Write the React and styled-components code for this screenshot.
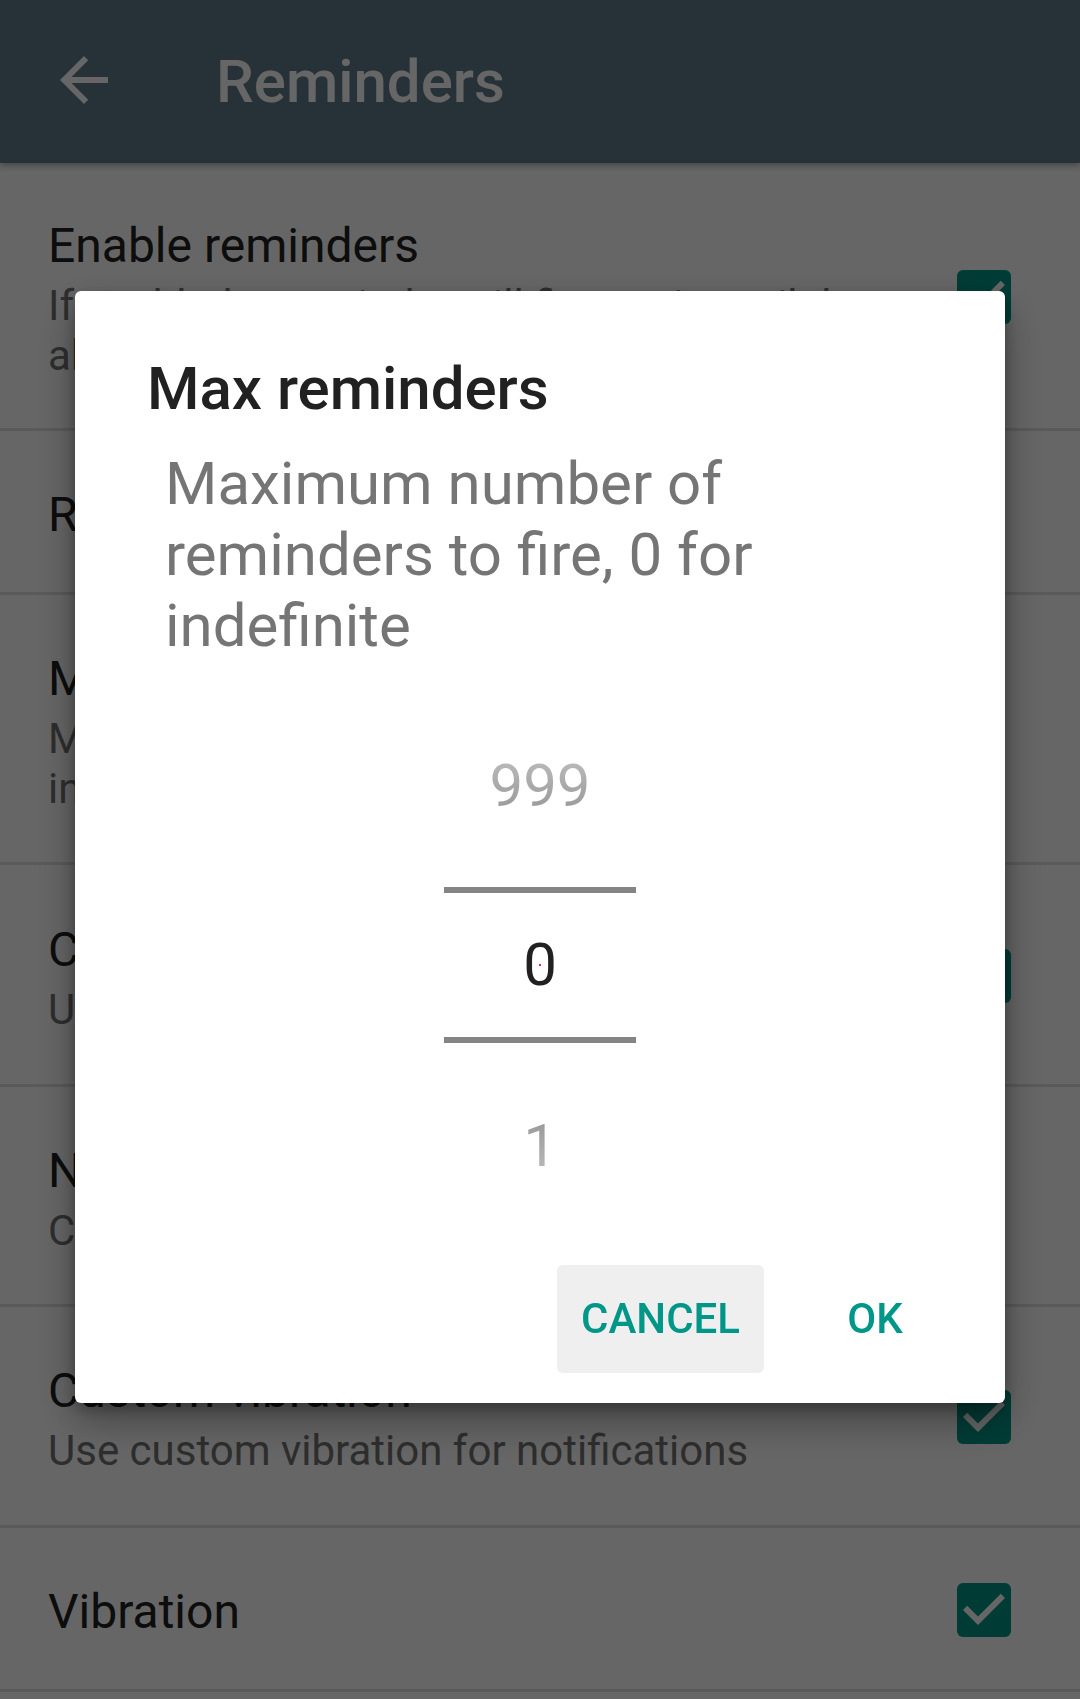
import React from 'react';
import styled, { createGlobalStyle } from 'styled-components';

const GlobalStyle = createGlobalStyle`
  body {
    margin: 0;
    background: #ffffff;
    font-family: Roboto, "Noto Sans", sans-serif;
  }
`

const prefs = [
    { title: 'Enable reminders', summary: ['If enabled, a reminder will fire again until the', 'alarm is dismissed'], checked: true, h: 268 },
    { title: 'Reminder interval', h: 164 },
    { title: 'Max reminders', summary: ['Maximum number of reminders to fire, 0 for', 'indefinite'], h: 270 },
    { title: 'Custom sound', summary: ['Use custom sound for notifications'], checked: true, h: 222 },
    { title: 'Notification sound', summary: ['Chime'], h: 220 },
    { title: 'Custom vibration', summary: ['Use custom vibration for notifications'], checked: true, h: 221 },
    { title: 'Vibration', checked: true, h: 164 },
    { title: 'Vibration pattern', summary: ['Short'], h: 220 },
]

const Check = () => (
    <CheckBox>
        <svg width="54" height="54" viewBox="3 3 18 18">
            <path d="M10 17l-5-5 1.41-1.41L10 14.17l7.59-7.59L19 8l-9 9z" fill="#ffffff" />
        </svg>
    </CheckBox>
)

const App = () => {
    return (
        <Page>
            <GlobalStyle />
            <Toolbar>
                <BackIcon width="72" height="72" viewBox="0 0 24 24">
                    <path d="M20 11H7.83l5.59-5.59L12 4l-8 8 8 8 1.41-1.41L7.83 13H20v-2z" fill="#ffffff" />
                </BackIcon>
                <ToolbarTitle>Reminders</ToolbarTitle>
            </Toolbar>

            <PrefList>
                {prefs.map((p) => (
                    <PrefRow key={p.title} $h={p.h}>
                        <PrefText>
                            <PrefTitle>{p.title}</PrefTitle>
                            {p.summary && (
                                <PrefSummary>
                                    {p.summary.map((line, i) => (
                                        <span key={i}>{line}{i < p.summary.length - 1 && <br />}</span>
                                    ))}
                                </PrefSummary>
                            )}
                        </PrefText>
                        {p.checked && <Check />}
                    </PrefRow>
                ))}
            </PrefList>

            <Scrim>
                <Dialog>
                    <DialogTitle>Max reminders</DialogTitle>
                    <DialogMessage>
                        Maximum number of<br />
                        reminders to fire, 0 for<br />
                        indefinite
                    </DialogMessage>

                    <Picker>
                        <PickerValue $h={202} $fade="up">999</PickerValue>
                        <PickerLine />
                        <PickerValue $h={144} $selected>0</PickerValue>
                        <PickerLine />
                        <PickerValue $h={206} $fade="down">1</PickerValue>
                    </Picker>

                    <ButtonBar>
                        <DialogButton $pressed>CANCEL</DialogButton>
                        <DialogButton>OK</DialogButton>
                    </ButtonBar>
                </Dialog>
            </Scrim>
        </Page>
    );
};

const Page = styled.div`
    width: 1080px;
    min-height: 1699px;
    background: #ffffff;
    overflow: hidden;
`

const Toolbar = styled.header`
    height: 163px;
    background: #607d8b;
    display: flex;
    align-items: center;
    box-shadow: 0 3px 6px rgba(0, 0, 0, 0.3);
    position: relative;
    z-index: 1;
`

const BackIcon = styled.svg`
    margin-left: 48px;
    margin-top: -4px;
    flex-shrink: 0;
`

const ToolbarTitle = styled.h1`
    margin: 0 0 0 96px;
    font-size: 60px;
    font-weight: 500;
    color: #ffffff;
    line-height: 72px;
`

const PrefList = styled.div`
    display: flex;
    flex-direction: column;
`

const PrefRow = styled.div`
    box-sizing: border-box;
    height: ${props => props.$h}px;
    display: flex;
    align-items: center;
    padding: 6px 69px 0 48px;
    border-bottom: 3px solid #e0e0e0;
`

const PrefText = styled.div`
    flex: 1;
    display: flex;
    flex-direction: column;
`

const PrefTitle = styled.div`
    font-size: 48px;
    line-height: 58px;
    color: #212121;
`

const PrefSummary = styled.div`
    margin-top: 6px;
    font-size: 42px;
    line-height: 50px;
    color: #737373;
`

const CheckBox = styled.div`
    width: 54px;
    height: 54px;
    border-radius: 6px;
    background: #009688;
    flex-shrink: 0;
    display: flex;
    margin-top: -4px;
`

const Scrim = styled.div`
    position: fixed;
    inset: 0;
    z-index: 5;
    background: rgba(0, 0, 0, 0.6);
    display: flex;
    justify-content: center;
    align-items: center;
    padding-bottom: 6px;
    box-sizing: border-box;
`

const Dialog = styled.div`
    width: 930px;
    box-sizing: border-box;
    background: #ffffff;
    border-radius: 6px;
    padding: 62px 0 30px 0;
    display: flex;
    flex-direction: column;
    box-shadow: 0 18px 40px rgba(0, 0, 0, 0.35), 0 6px 14px rgba(0, 0, 0, 0.25);
`

const DialogTitle = styled.h2`
    margin: 0;
    padding-left: 72px;
    font-size: 60px;
    font-weight: 500;
    line-height: 72px;
    color: #212121;
`

const DialogMessage = styled.p`
    margin: 23px 0 24px 0;
    padding-left: 90px;
    font-size: 60px;
    line-height: 71px;
    color: #757575;
`

const Picker = styled.div`
    align-self: center;
    width: 192px;
    display: flex;
    flex-direction: column;
    align-items: stretch;
`

const PickerValue = styled.div`
    position: relative;
    height: ${props => props.$h}px;
    display: flex;
    align-items: center;
    justify-content: center;
    font-size: 60px;
    line-height: 72px;
    color: ${props => props.$selected ? '#212121' : '#a3a3a3'};

    ${props => props.$fade && `
        background: linear-gradient(${props.$fade === 'up' ? '180deg' : '0deg'}, transparent 0, transparent 35%, #bcbcbc 35%, #9a9a9a 62%, transparent 62%);
        -webkit-background-clip: text;
        background-clip: text;
        color: transparent;
    `}

    ${props => props.$selected && `
        &::after {
            content: '';
            position: absolute;
            left: 95px;
            top: 71px;
            width: 2px;
            height: 2px;
            background: #e91e63;
        }
    `}
`

const PickerLine = styled.div`
    height: 6px;
    background: #848484;
`

const ButtonBar = styled.div`
    margin-top: 16px;
    display: flex;
    justify-content: flex-end;
    gap: 8px;
    padding-right: 27px;
`

const DialogButton = styled.button`
    min-width: 206px;
    height: 108px;
    padding: 0 24px;
    border: none;
    border-radius: 6px;
    background: ${props => props.$pressed ? '#efefef' : 'transparent'};
    color: #009688;
    font-family: Roboto, "Noto Sans", sans-serif;
    font-size: 42px;
    font-weight: 500;
`

export default App;
